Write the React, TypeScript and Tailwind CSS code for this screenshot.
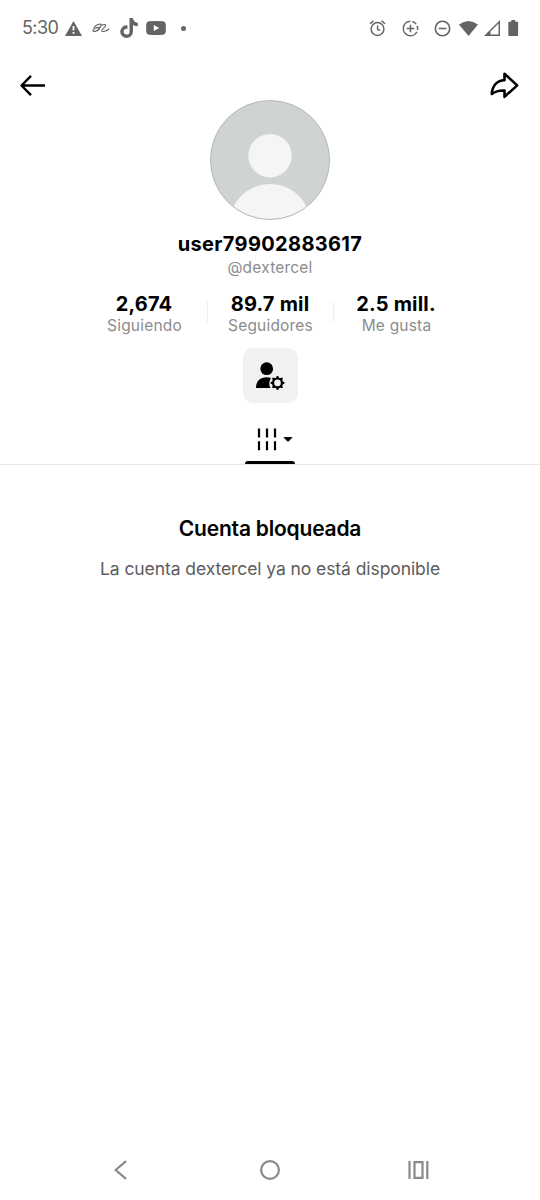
import { FaTiktok } from 'react-icons/fa6';

interface StatProps {
  value: string;
  label: string;
}

function Stat({ value, label }: StatProps) {
  return (
    <div className="flex w-[125px] flex-col items-center whitespace-nowrap">
      <span className="text-[20px] leading-6 font-bold tracking-[0.2px] text-black">{value}</span>
      <span className="ml-px text-[15.5px] leading-5 tracking-[0.2px] text-[#8c8c8c]">{label}</span>
    </div>
  );
}

function StatusBar() {
  return (
    <div className="flex h-14 items-center justify-between pr-[21px] pl-[22px] text-[#646464]">
      <div className="flex items-center">
        <span className="w-[43px] text-[18px] leading-none tracking-[-0.6px]">5:30</span>
        <svg className="h-[15px] w-[17px]" viewBox="0 0 17 15" fill="currentColor">
          <path fillRule="evenodd" d="M8.5 0 17 15H0ZM7.6 5v4.6h1.8V5Zm0 6v1.8h1.8V11Z" />
        </svg>
        <svg
          className="ml-[10px] h-[10px] w-[18px]"
          viewBox="0 0 18 10"
          fill="none"
          stroke="currentColor"
          strokeLinecap="round"
          strokeLinejoin="round"
        >
          <path d="M2 4.5C4 1.8 8 .4 9.2 1.5C9.8 2.8 7.5 4.500 6.500 6.800" strokeWidth="1.1" />
          <path d="M7.500 4.300C4.500 4.200 .8 5.800 1 7.600C1.500 9.300 5.300 8 7.200 6" strokeWidth="1.3" />
          <path d="M10 2.200C12 1 14.300 1.500 13.300 3.300C12.200 5.200 9.300 6.800 9.600 8C10.500 9.300 14.500 8 17 6" strokeWidth="1.1" />
        </svg>
        <FaTiktok className="ml-[10px] h-5 w-[18px]" />
        <svg className="ml-2 h-[14px] w-5" viewBox="0 0 20 14" fill="currentColor">
          <path
            fillRule="evenodd"
            d="M3 .2Q10 -.2 17 .2Q19.5 .4 19.7 3Q20 7 19.7 11Q19.5 13.6 17 13.8Q10 14.2 3 13.8Q.5 13.6 .3 11Q0 7 .3 3Q.5 .4 3 .2ZM7.8 4v6L13.2 7Z"
          />
        </svg>
        <span className="ml-[15px] size-[5px] rounded-full bg-current" />
      </div>
      <div className="flex items-center">
        <svg className="size-[17px]" viewBox="0 0 17 17" fill="none" stroke="currentColor" strokeWidth="1.5">
          <circle cx="8.5" cy="9" r="6.4" />
          <path d="M8.6 5.5v4.2l2.7 .6M1 3.8 4.4 .9M16 3.8 12.6 .9" />
        </svg>
        <svg className="ml-4 size-[17px]" viewBox="0 0 17 17" fill="none" stroke="currentColor" strokeWidth="1.5">
          <path d="M8.3 1.3A7.2 7.2 0 1 0 14.9 11.8M10.3 1.5A7.2 7.2 0 0 1 14.1 3.9M15.1 5.7A7.2 7.2 0 0 1 15.5 10.2M8.5 4.7v7.6M4.7 8.5h7.6" />
        </svg>
        <svg className="ml-[15px] size-[17px]" viewBox="0 0 17 17" fill="none" stroke="currentColor" strokeWidth="1.6">
          <circle cx="8.5" cy="8.5" r="7.2" />
          <path d="M4.7 8.5h7.6" />
        </svg>
        <svg className="ml-2 h-[15px] w-[19px]" viewBox="0 0 19 15" fill="currentColor">
          <path d="M0 3.5Q9.5 -3.5 19 3.5L9.5 15Z" />
        </svg>
        <svg className="ml-1.5 size-4" viewBox="0 0 16 16" fill="currentColor">
          <path fillRule="evenodd" d="M16 0v16H0ZM14.5 3.5 6.5 11.5v3h8Z" />
        </svg>
        <svg className="ml-2 h-4 w-[11px]" viewBox="0 0 11 16" fill="currentColor">
          <path d="M3.3 0h4v1.8H9.500q.6 0 .6 .8V15q0 1-.8 1H1.200q-.9 0-.9-1V2.600q0-.8 .9-.8H3.300Z" />
        </svg>
      </div>
    </div>
  );
}

function Header() {
  return (
    <div className="flex h-11 items-start justify-between px-5 pt-[15px]">
      <button type="button" aria-label="Volver">
        <svg
          className="mt-[3px] h-[22px] w-[26px]"
          viewBox="0 0 26 22"
          fill="none"
          stroke="#000"
          strokeWidth="2.4"
          strokeLinejoin="round"
        >
          <path d="M25 11.5H1.8M11 1.8 1.5 11.5 11 21.2" />
        </svg>
      </button>
      <button type="button" aria-label="Compartir">
        <svg
          className="h-[29px] w-[30px]"
          viewBox="0 0 30 29"
          fill="none"
          stroke="#000"
          strokeWidth="2.6"
          strokeLinejoin="round"
        >
          <path d="M14.500 2.800 27.200 14.400 14.500 25.800V19.500C9 19.300 5.500 20.200 1.800 23C2.300 15 7 9.600 14.500 9.100Z" />
        </svg>
      </button>
    </div>
  );
}

function Avatar() {
  return (
    <svg className="size-[120px] shrink-0" viewBox="0 0 120 120">
      <clipPath id="avatar">
        <circle cx="60" cy="60" r="59.5" />
      </clipPath>
      <g clipPath="url(#avatar)">
        <rect width="120" height="120" fill="#d0d3d4" />
        <circle cx="60" cy="55.7" r="21.7" fill="#f5f5f5" />
        <circle cx="60" cy="125" r="41" fill="#f5f5f5" />
      </g>
      <circle cx="60" cy="60" r="59.5" fill="none" stroke="#b5b7b8" />
    </svg>
  );
}

const gearTeeth = [0, 45, 90, 135, 180, 225, 270, 315];

function UserSettingsIcon() {
  return (
    <svg className="h-7 w-[29px]" viewBox="0 0 29 28">
      <circle cx="10.7" cy="6.7" r="6.4" />
      <path d="M0 26C0 19 4.300 15.200 10.800 15.200Q13.400 15.200 15.100 15.900Q11.600 20.800 14.600 26Z" />
      <circle cx="21.5" cy="20.9" r="4.4" fill="none" stroke="#000" strokeWidth="2.2" />
      {gearTeeth.map((angle) => (
        <path key={angle} d="M19.7 16.5 20.8 13.9H22.2L23.3 16.5Z" transform={`rotate(${angle} 21.5 20.9)`} />
      ))}
    </svg>
  );
}

function NavigationBar() {
  return (
    <div className="mt-auto flex h-[60px] items-center justify-between pr-[111px] pl-[114px]">
      <svg className="h-5 w-[13px]" viewBox="0 0 13 20" fill="none" stroke="#8a8a8a" strokeWidth="2.2">
        <path d="M12 1.2 1.7 10 12 18.8" />
      </svg>
      <svg className="ml-[5px] size-5" viewBox="0 0 20 20" fill="none" stroke="#8a8a8a" strokeWidth="2.2">
        <circle cx="10" cy="10" r="8.9" />
      </svg>
      <svg className="h-[18px] w-[21px]" viewBox="0 0 21 18" fill="none" stroke="#8a8a8a" strokeWidth="2.2">
        <path d="M1.5 0v18M19.3 0v18M6.5 1.1h8v15.8h-8Z" />
      </svg>
    </div>
  );
}

export default function App() {
  return (
    <div className="flex h-[1200px] w-[540px] flex-col overflow-hidden bg-white font-['Inter',sans-serif]">
      <StatusBar />
      <Header />

      <div className="flex flex-col items-center">
        <Avatar />
        <h1 className="mt-3 text-[20px] leading-6 font-bold tracking-[0.35px] text-black">user79902883617</h1>
        <p className="mt-0.5 text-[15.5px] leading-5 tracking-[0.2px] text-[#8c8c8c]">@dextercel</p>

        <div className="mt-[14px] flex items-start">
          <Stat value="2,674" label="Siguiendo" />
          <div className="mt-[10px] h-5 w-px bg-[#ececec]" />
          <Stat value="89.7 mil" label="Seguidores" />
          <div className="mt-[10px] h-5 w-px bg-[#ececec]" />
          <Stat value="2.5 mill." label="Me gusta" />
        </div>

        <button
          type="button"
          aria-label="Opciones de cuenta"
          className="mt-3 flex h-[55px] w-[55px] items-center justify-center rounded-[10px] bg-[#f1f1f1]"
        >
          <UserSettingsIcon />
        </button>
      </div>

      <div className="flex h-[62px] justify-center border-b border-[#e8e8e8]">
        <div className="flex w-[50px] flex-col items-center justify-between">
          <svg className="mt-[25px] ml-[9px] h-[23px] w-[36px] shrink-0" viewBox="0 0 36 23">
            <path
              d="M2 .5v9M10 .5v9M18 .5v9M2 13.2v9M10 13.2v9M18 13.2v9"
              stroke="#000"
              strokeWidth="2.2"
            />
            <path d="M27 9.500h8L31 13.500Z" stroke="#000" strokeWidth=".8" strokeLinejoin="round" />
          </svg>
          <div className="h-[3px] w-[50px] rounded-t-full bg-black" />
        </div>
      </div>

      <div className="flex flex-col items-center pt-[50px]">
        <h2 className="text-[21px] leading-7 font-semibold tracking-[-0.2px] text-black">Cuenta bloqueada</h2>
        <p className="mt-[14px] text-[17.5px] leading-6 tracking-[-0.08px] text-[#5c5c5c]">
          La cuenta dextercel ya no está disponible
        </p>
      </div>

      <NavigationBar />
    </div>
  );
}
